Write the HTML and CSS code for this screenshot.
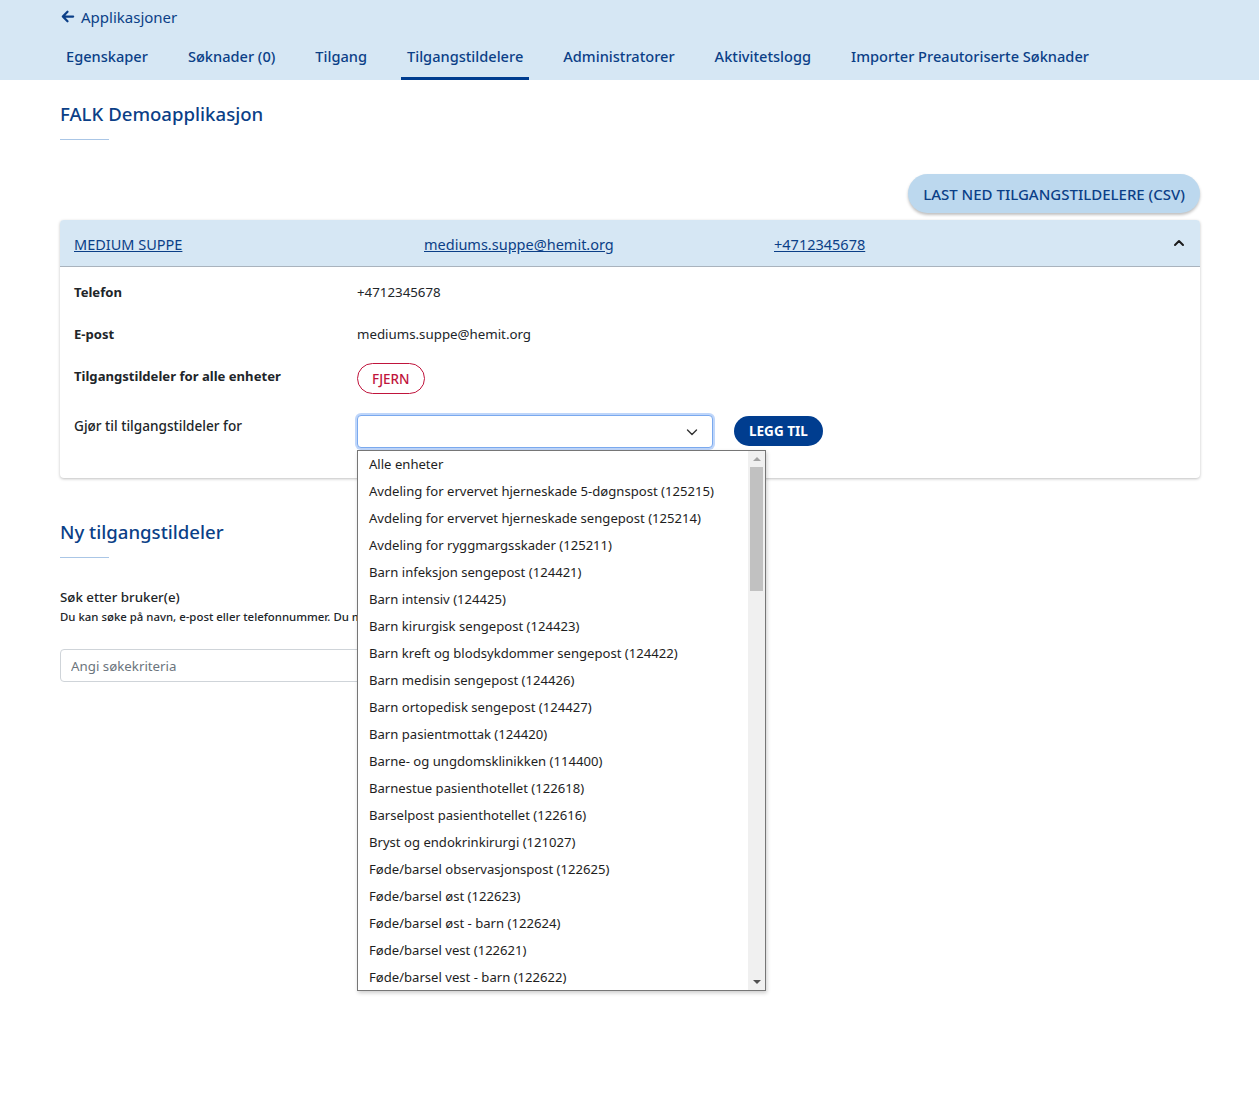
FILE: index.html
```html
<!DOCTYPE html>
<html lang="no">
<head>
<meta charset="utf-8">
<title>Tilgangstildelere</title>
<link rel="stylesheet" href="styles.css">
</head>
<body>
<header class="topbar">
  <a class="back" href="#"><svg class="back-icon" viewBox="0 0 16 16" width="15" height="15"><path d="M14 8H3M8 3L3 8l5 5" fill="none" stroke="currentColor" stroke-width="2.4" stroke-linecap="round" stroke-linejoin="round"/></svg>Applikasjoner</a>
  <nav class="tabs">
    <a class="tab" href="#">Egenskaper</a>
    <a class="tab" href="#">Søknader (0)</a>
    <a class="tab" href="#">Tilgang</a>
    <a class="tab active" href="#">Tilgangstildelere</a>
    <a class="tab" href="#">Administratorer</a>
    <a class="tab" href="#">Aktivitetslogg</a>
    <a class="tab" href="#">Importer Preautoriserte Søknader</a>
  </nav>
</header>

<main class="content">
  <h1 class="title">FALK Demoapplikasjon</h1>

  <div class="actions">
    <button class="btn-csv">LAST NED TILGANGSTILDELERE (CSV)</button>
  </div>

  <section class="card">
    <div class="card-head">
      <a href="#" class="head-link">MEDIUM SUPPE</a>
      <a href="#" class="head-link">mediums.suppe@hemit.org</a>
      <a href="#" class="head-link">+4712345678</a>
      <svg class="chev-up" viewBox="0 0 12 12" width="12" height="12"><path d="M2 8l4-4 4 4" fill="none" stroke="#1c1c1c" stroke-width="2" stroke-linecap="round" stroke-linejoin="round"/></svg>
    </div>
    <div class="card-body">
      <div class="row">
        <div class="label bold">Telefon</div>
        <div class="value">+4712345678</div>
      </div>
      <div class="row">
        <div class="label bold">E-post</div>
        <div class="value">mediums.suppe@hemit.org</div>
      </div>
      <div class="row row-btn">
        <div class="label bold">Tilgangstildeler for alle enheter</div>
        <div class="value"><button class="btn-fjern">FJERN</button></div>
      </div>
      <div class="row row-select">
        <div class="label plain">Gjør til tilgangstildeler for</div>
        <div class="value select-wrap">
          <div class="select">
            <svg class="chev-down" viewBox="0 0 12 12" width="12" height="12"><path d="M1.5 4l4.5 4.5L10.5 4" fill="none" stroke="#333" stroke-width="1.4" stroke-linecap="round" stroke-linejoin="round"/></svg>
          </div>
          <button class="btn-legg">LEGG TIL</button>
          <div class="listbox">
            <ul class="options">
              <li>Alle enheter</li>
              <li>Avdeling for ervervet hjerneskade 5-døgnspost (125215)</li>
              <li>Avdeling for ervervet hjerneskade sengepost (125214)</li>
              <li>Avdeling for ryggmargsskader (125211)</li>
              <li>Barn infeksjon sengepost (124421)</li>
              <li>Barn intensiv (124425)</li>
              <li>Barn kirurgisk sengepost (124423)</li>
              <li>Barn kreft og blodsykdommer sengepost (124422)</li>
              <li>Barn medisin sengepost (124426)</li>
              <li>Barn ortopedisk sengepost (124427)</li>
              <li>Barn pasientmottak (124420)</li>
              <li>Barne- og ungdomsklinikken (114400)</li>
              <li>Barnestue pasienthotellet (122618)</li>
              <li>Barselpost pasienthotellet (122616)</li>
              <li>Bryst og endokrinkirurgi (121027)</li>
              <li>Føde/barsel observasjonspost (122625)</li>
              <li>Føde/barsel øst (122623)</li>
              <li>Føde/barsel øst - barn (122624)</li>
              <li>Føde/barsel vest (122621)</li>
              <li>Føde/barsel vest - barn (122622)</li>
            </ul>
            <div class="scrollbar">
              <span class="arrow up"></span>
              <span class="thumb"></span>
              <span class="arrow down"></span>
            </div>
          </div>
        </div>
      </div>
    </div>
  </section>

  <h2 class="title title2">Ny tilgangstildeler</h2>
  <div class="search">
    <div class="search-label">Søk etter bruker(e)</div>
    <div class="search-help">Du kan søke på navn, e-post eller telefonnummer. Du må skrive minst tre tegn.</div>
    <input class="search-input" type="text" placeholder="Angi søkekriteria">
  </div>
</main>
</body>
</html>
```

FILE: styles.css
```css
* { box-sizing: border-box; }
html, body { margin: 0; padding: 0; }
body {
  font-family: "Noto Sans", "Open Sans", sans-serif;
  color: #212529;
  background: #fff;
  font-size: 13.3px;
  min-height: 1103px;
}
a { text-decoration: none; color: inherit; }
button { font-family: inherit; cursor: pointer; }

.topbar {
  background: #d6e7f4;
  height: 80px;
  padding: 0 60px;
  display: flex;
  flex-direction: column;
}
.back {
  display: inline-flex;
  align-items: center;
  gap: 6px;
  color: #0b3f87;
  font-size: 15px;
  height: 33px;
}
.back-icon { color: #0b3f87; }
.tabs {
  display: flex;
  gap: 28px;
  margin-top: 4px;
}
.tab {
  padding: 0 6px;
  height: 43px;
  line-height: 39px;
  font-size: 14.6px;
  font-weight: 500;
  color: #0b3f87;
  border-bottom: 3px solid transparent;
}
.tab.active { border-bottom-color: #003d8f; }

.content {
  padding: 0 59px 40px 60px;
}
.title {
  margin: 0;
  font-size: 18.6px;
  font-weight: 500;
  color: #0b3f87;
  padding-top: 20px;
  padding-bottom: 12px;
  line-height: 27px;
}
.title::after {
  content: "";
  display: block;
  width: 49px;
  height: 1px;
  background: #aac6e6;
  margin-top: 12px;
}
.actions {
  display: flex;
  justify-content: flex-end;
  margin-top: 22px;
}
.btn-csv {
  background: #bcd8ee;
  border: none;
  color: #0b3f87;
  font-size: 15px;
  font-weight: 500;
  height: 39px;
  padding: 0 15px;
  border-radius: 20px;
  box-shadow: 0 2px 3px rgba(0,0,0,0.25);
}

.card {
  margin-top: 7px;
  border-radius: 4px;
  box-shadow: 0 1px 3px rgba(0,0,0,0.25);
  background: #fff;
}
.card-head {
  background: #d6e7f4;
  height: 47px;
  border-radius: 4px 4px 0 0;
  border-bottom: 1px solid #a9b3bd;
  display: grid;
  grid-template-columns: 350px 350px 1fr auto;
  align-items: center;
  padding: 0 15px 0 14px;
}
.head-link {
  color: #0b3f87;
  text-decoration: underline;
  font-size: 14.5px;
  padding-top: 2px;
}
.chev-up { display: block; }

.card-body {
  padding: 10px 14px 12px;
}
.row {
  display: grid;
  grid-template-columns: 283px 1fr;
  align-items: start;
  height: 42px;
  line-height: 30px;
}
.row-btn { height: 50px; }
.row-select { height: 55px; }
.bold { font-weight: 700; }
.label { font-size: 13.1px; }
.label.plain { font-size: 13.6px; font-weight: 500; }
.value { font-size: 13.3px; }
.btn-fjern {
  background: #fff;
  border: 1.5px solid #c0143c;
  color: #c0143c;
  font-size: 13.5px;
  font-weight: 500;
  height: 31px;
  padding: 0 14px;
  border-radius: 16px;
  margin-top: 2px;
}
.select-wrap {
  position: relative;
  display: flex;
  align-items: center;
  gap: 21px;
  margin-top: 4px;
}
.select {
  width: 356px;
  height: 33px;
  border: 1px solid #7aa9ee;
  border-radius: 4px;
  box-shadow: 0 0 0 2px #bfd6fa;
  display: flex;
  align-items: center;
  justify-content: flex-end;
  padding-right: 14px;
  background: #fff;
}
.chev-down { display: block; }
.btn-legg {
  background: #003d8f;
  color: #fff;
  border: none;
  font-size: 13.5px;
  font-weight: 700;
  height: 30px;
  padding: 0 15px;
  border-radius: 15px;
  margin-top: -2px;
}

.listbox {
  position: absolute;
  left: 0;
  top: 35px;
  width: 409px;
  height: 541px;
  border: 1px solid #767676;
  background: #fff;
  box-shadow: 1px 2px 4px rgba(0,0,0,0.2);
  display: flex;
  z-index: 10;
}
.options {
  list-style: none;
  margin: 0;
  padding: 0;
  flex: 1;
}
.options li {
  height: 27px;
  line-height: 26px;
  padding-left: 11px;
  font-size: 13.1px;
  color: #1e1e1e;
  white-space: nowrap;
}
.scrollbar {
  width: 17px;
  background: #f0f0f0;
  display: flex;
  flex-direction: column;
  align-items: center;
}
.arrow {
  width: 0;
  height: 0;
  border-left: 4px solid transparent;
  border-right: 4px solid transparent;
  margin: 6px 0;
}
.arrow.up { border-bottom: 4px solid #a3a3a3; }
.arrow.down { border-top: 4px solid #505050; margin-top: auto; }
.thumb {
  width: 13px;
  height: 124px;
  background: #c1c1c1;
}

.title2 {
  padding-top: 40px;
}
.search {
  margin-top: 16px;
}
.search-label {
  font-size: 13.3px;
  font-weight: 500;
  line-height: 22px;
}
.search-help {
  font-size: 11.4px;
  font-weight: 500;
  line-height: 18px;
}
.search-input {
  margin-top: 23px;
  width: 600px;
  height: 33px;
  border: 1px solid #cfd4d9;
  border-radius: 4px;
  padding: 0 10px;
  font-family: inherit;
  font-size: 13.3px;
}
.search-input::placeholder { color: #6c757d; }
```
